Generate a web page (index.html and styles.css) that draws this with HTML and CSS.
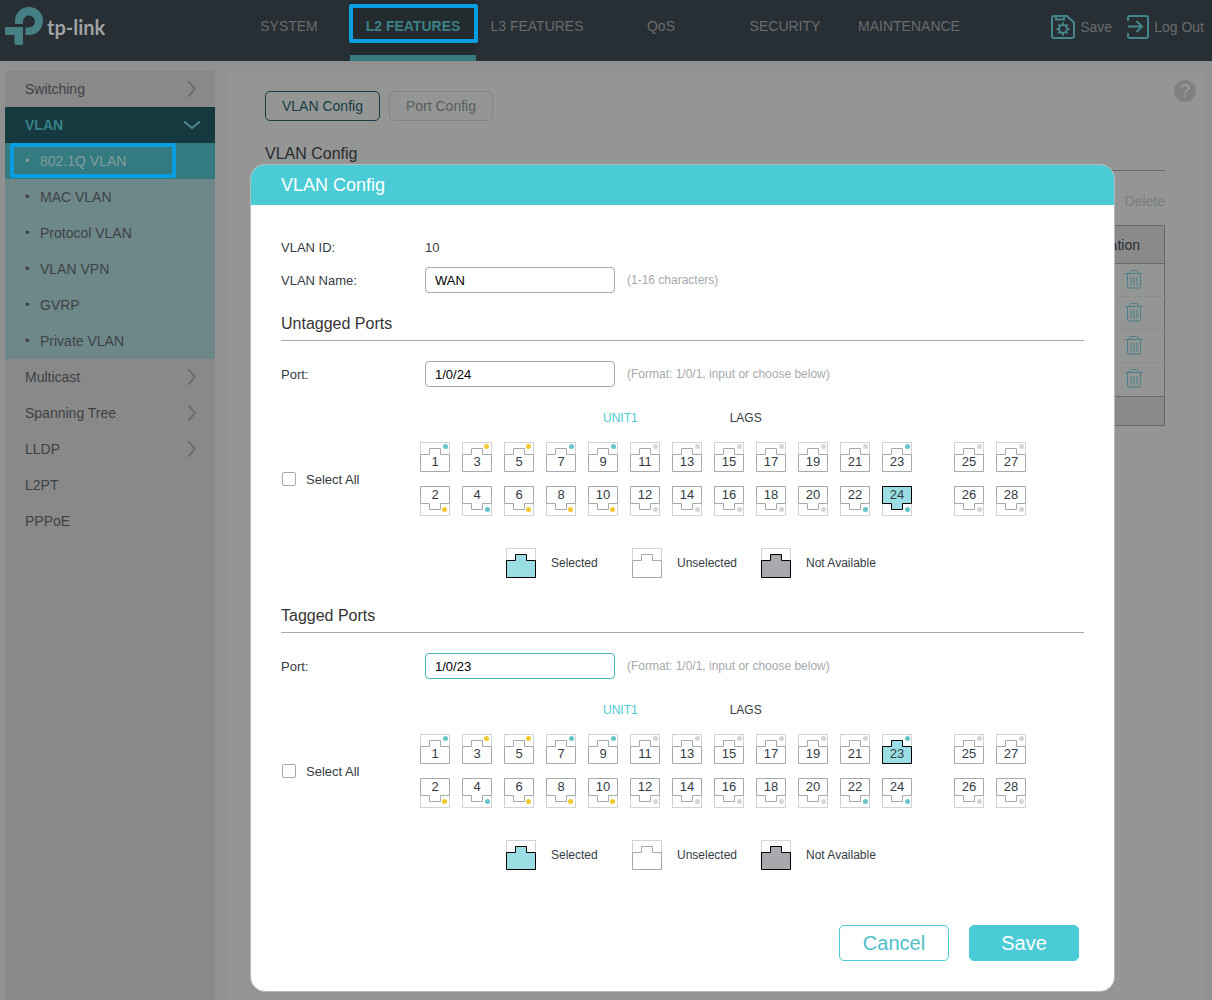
FILE: index.html
```html
<!DOCTYPE html>
<html lang="en">
<head>
<meta charset="utf-8">
<meta name="viewport" content="width=device-width, initial-scale=1">
<title>VLAN Config</title>
<link rel="stylesheet" href="styles.css">
</head>
<body>
<svg class="sprite" aria-hidden="true">
  <symbol id="jack-up" viewBox="0 0 30 30"><rect class="frame" x=".5" y=".5" width="29" height="29"/><path class="jack" d="M.5 12.5H9.5V6.5H20.5V12.5H29.5V29.5H.5Z"/></symbol>
  <symbol id="jack-down" viewBox="0 0 30 30"><rect class="frame" x=".5" y=".5" width="29" height="29"/><path class="jack" d="M.5 .5H29.5V17.5H20.5V23.5H9.5V17.5H.5Z"/></symbol>
  <symbol id="chevron" viewBox="0 0 10 18"><path d="M1.5 1.5L8 9L1.5 16.5"/></symbol>
  <symbol id="trash" viewBox="0 0 18 19"><path d="M0 3.500H18M4.500 3.500Q4.500 .5 6.500 .5H11.500Q13.500 .5 13.500 3.500M2.500 3.500V16.500Q2.500 18 4 18H14Q15.500 18 15.500 16.500V3.500"/><path class="bars" d="M6 7V15.500M9 7V15.500M12 7V15.500"/></symbol>
</svg>

<header class="topbar">
  <a class="brand" href="#">
    <svg class="logo" viewBox="0 0 38 38" aria-hidden="true"><path d="M10 17V14A14 14 0 1 1 24 28H20.500V20.500H24A6 6 0 1 0 18 14V17Z"/><path d="M0 20H18V36.500Q18 38 16.500 38H11.500Q9.500 38 9.500 36V28H1Q0 28 0 27Z"/></svg>
    <span>tp-link</span>
  </a>
  <nav class="mainnav">
    <a href="#">SYSTEM</a>
    <a href="#" class="active">L2 FEATURES</a>
    <a href="#">L3 FEATURES</a>
    <a href="#">QoS</a>
    <a href="#">SECURITY</a>
    <a href="#">MAINTENANCE</a>
  </nav>
  <div class="actions">
    <button type="button">
      <svg viewBox="0 0 24 24" aria-hidden="true"><path d="M1 3Q1 1 3 1H16L23 7.500V21Q23 23 21 23H3Q1 23 1 21ZM5 1V4.500H13V1"/><circle cx="12" cy="14" r="4"/><path d="M12 7.500V10M12 18V20.500M5.500 14H8M16 14H18.500M7.400 9.400L9.200 11.200M14.800 16.800L16.600 18.600M7.400 18.600L9.200 16.800M14.800 11.200L16.600 9.400"/></svg>
      Save
    </button>
    <button type="button">
      <svg viewBox="0 0 22 24" aria-hidden="true"><path d="M1 6V3Q1 1 3 1H19Q21 1 21 3V21Q21 23 19 23H3Q1 23 1 21V18M1 11.500H15M9.500 6L15 11.500L9.500 17"/></svg>
      Log Out
    </button>
  </div>
</header>

<div class="page">
  <nav class="sidebar">
    <a href="#">Switching<svg class="chev"><use href="#chevron"/></svg></a>
    <a href="#" class="open">VLAN<svg class="down" viewBox="0 0 18 10"><path d="M1 1.500L9 8L17 1.500"/></svg></a>
    <ul>
      <li class="current"><a href="#">802.1Q VLAN</a></li>
      <li><a href="#">MAC VLAN</a></li>
      <li><a href="#">Protocol VLAN</a></li>
      <li><a href="#">VLAN VPN</a></li>
      <li><a href="#">GVRP</a></li>
      <li><a href="#">Private VLAN</a></li>
    </ul>
    <a href="#">Multicast<svg class="chev"><use href="#chevron"/></svg></a>
    <a href="#">Spanning Tree<svg class="chev"><use href="#chevron"/></svg></a>
    <a href="#">LLDP<svg class="chev"><use href="#chevron"/></svg></a>
    <a href="#">L2PT</a>
    <a href="#">PPPoE</a>
  </nav>

  <main class="content">
    <button type="button" class="help" aria-label="Help">?</button>
    <div class="pagetabs">
      <button type="button" class="selected">VLAN Config</button>
      <button type="button">Port Config</button>
    </div>
    <h2>VLAN Config</h2>
    <div class="tools"><button type="button">Delete</button></div>
    <table class="vlans">
      <thead><tr><th></th><th class="op">Operation</th></tr></thead>
      <tbody>
        <tr><td></td><td><button type="button" aria-label="Delete"><svg><use href="#trash"/></svg></button></td></tr>
        <tr><td></td><td><button type="button" aria-label="Delete"><svg><use href="#trash"/></svg></button></td></tr>
        <tr><td></td><td><button type="button" aria-label="Delete"><svg><use href="#trash"/></svg></button></td></tr>
        <tr><td></td><td><button type="button" aria-label="Delete"><svg><use href="#trash"/></svg></button></td></tr>
      </tbody>
      <tfoot><tr><td colspan="2"></td></tr></tfoot>
    </table>
  </main>
</div>

<div class="overlay">
  <form class="modal" role="dialog" aria-labelledby="dialog-title">
    <h1 id="dialog-title">VLAN Config</h1>
    <div class="modal-body">
      <div class="row id-row"><span class="label">VLAN ID:</span><span>10</span></div>
      <div class="row"><label class="label" for="vlan-name">VLAN Name:</label><input type="text" id="vlan-name" value="WAN"><span class="hint">(1-16 characters)</span></div>

      <section>
        <h3>Untagged Ports</h3>
        <div class="row"><label class="label" for="untagged">Port:</label><input type="text" id="untagged" value="1/0/24"><span class="hint">(Format: 1/0/1, input or choose below)</span></div>
        <div class="units"><button type="button" class="selected">UNIT1</button><button type="button">LAGS</button></div>
        <div class="picker">
          <label class="all"><input type="checkbox">Select All</label>
          <div class="ports" data-selected="24"></div>
        </div>
        <ul class="legend">
          <li><svg class="on"><use href="#jack-up"/></svg>Selected</li>
          <li><svg><use href="#jack-up"/></svg>Unselected</li>
          <li><svg class="off"><use href="#jack-up"/></svg>Not Available</li>
        </ul>
      </section>

      <section>
        <h3>Tagged Ports</h3>
        <div class="row"><label class="label" for="tagged">Port:</label><input type="text" id="tagged" class="focused" value="1/0/23"><span class="hint">(Format: 1/0/1, input or choose below)</span></div>
        <div class="units"><button type="button" class="selected">UNIT1</button><button type="button">LAGS</button></div>
        <div class="picker">
          <label class="all"><input type="checkbox">Select All</label>
          <div class="ports" data-selected="23"></div>
        </div>
        <ul class="legend">
          <li><svg class="on"><use href="#jack-up"/></svg>Selected</li>
          <li><svg><use href="#jack-up"/></svg>Unselected</li>
          <li><svg class="off"><use href="#jack-up"/></svg>Not Available</li>
        </ul>
      </section>

      <div class="buttons">
        <button type="button">Cancel</button>
        <button type="submit" class="primary">Save</button>
      </div>
    </div>
  </form>
</div>
<script src="ports.js"></script>
</body>
</html>
```

FILE: styles.css
```css
* { box-sizing: border-box; }

body {
  margin: 0;
  min-height: 100vh;
  display: flex;
  flex-direction: column;
  background: #919191;
  color: #353c44;
  font-family: "Liberation Sans", Arial, sans-serif;
  font-size: 14px;
}

a { color: inherit; text-decoration: none; }
ul { list-style: none; margin: 0; padding: 0; }
svg { fill: none; }
button, input { font: inherit; color: inherit; }
button { padding: 0; border: 0; background: none; cursor: pointer; }
.sprite { position: absolute; width: 0; height: 0; }

/* Top bar */
.topbar {
  display: flex;
  height: 61px;
  padding: 0 7px 0 5px;
  background: #272e34;
  color: #686c6f;
}
.brand {
  display: flex;
  gap: 4px;
  width: 222px;
  padding-top: 7px;
  color: #a0a2a3;
  font-family: Lato, sans-serif;
  font-size: 20px;
  font-weight: bold;
  line-height: 40px;
}
.logo { width: 38px; height: 38px; }
.logo path { fill: #468085; }
.mainnav { display: flex; flex: 1; }
.mainnav a {
  flex: 0 1 124px;
  line-height: 52px;
  text-align: center;
  white-space: nowrap;
}
.mainnav .active {
  position: relative;
  flex-basis: 126px;
  margin: 0 -1px;
  border-bottom: 6px solid #387a7f;
  background: #232b2e;
  color: #3d8186;
  font-weight: bold;
}
.mainnav .active::after {
  content: "";
  position: absolute;
  inset: 4px -2px 12px -1px;
  border: 4px solid #079fe2;
  border-radius: 2px;
}
.actions { display: flex; gap: 15px; padding: 0 1px 7px 0; }
.actions button { display: flex; align-items: center; gap: 5px; white-space: nowrap; }
.actions svg { width: 24px; height: 24px; stroke: #45868b; stroke-width: 2; }
.actions button + button svg { width: 22px; }

/* Side menu */
.page { display: flex; flex: 1; gap: 10px; padding: 10px 7px 0 5px; }
.sidebar { flex: 0 0 210px; background: #898989; color: #3d4246; line-height: 36px; }
.sidebar > a {
  display: flex;
  align-items: center;
  justify-content: space-between;
  height: 36px;
  padding: 0 18px 0 20px;
}
.chev { width: 10px; height: 18px; stroke: #6c6f70; stroke-width: 2; }
.sidebar .open { padding-right: 14px; background: #15393f; color: #388187; font-weight: bold; }
.down { width: 18px; height: 10px; stroke: #4c8a8f; stroke-width: 2; }
.sidebar ul { background: #6e8889; }
.sidebar li { display: flex; padding-left: 20px; }
.sidebar li::before { content: "•"; width: 15px; font-size: 13px; }
.sidebar .current { position: relative; background: #337b80; color: #849b9d; }
.sidebar .current::after {
  content: "";
  position: absolute;
  inset: 0 39px 1px 5px;
  border: 4px solid #079fe2;
  border-radius: 2px;
}

/* Page behind the dialog */
.content { position: relative; flex: 1; padding: 20px 40px; background: #949695; }
.help {
  position: absolute;
  top: 9px;
  right: 9px;
  width: 22px;
  height: 22px;
  border-radius: 50%;
  background: #807f82;
  color: #a0a0a0;
  font-size: 18px;
  line-height: 22px;
}
.pagetabs { display: flex; gap: 9px; }
.pagetabs button {
  height: 30px;
  padding: 0 16px;
  border: 1px solid #838585;
  border-radius: 5px;
  color: #5a5d5f;
}
.pagetabs .selected { border-color: #153d43; color: #153d43; }
.content h2 {
  margin: 22px 0 0;
  padding-bottom: 5px;
  border-bottom: 1px solid #68696b;
  color: #292a2c;
  font-size: 16px;
  font-weight: normal;
  line-height: 22px;
}
.tools { padding: 20px 0 14px; text-align: right; line-height: 20px; color: #7b7c7e; }
.vlans {
  width: 100%;
  border: 1px solid #68696b;
  border-collapse: collapse;
}
.vlans th { height: 38px; padding: 0; background: #898a8a; font-weight: normal; color: #292c30; }
.vlans .op { width: 110px; }
.vlans tbody td { height: 33px; padding: 0 21px 1px 0; border-top: 1px solid #8d8f8f; text-align: right; }
.vlans tbody button { display: block; margin-left: auto; }
.vlans tbody tr:first-child td, .vlans tfoot td { border-top: 1px solid #68696b; }
.vlans tbody tr:last-child td { height: 34px; padding-bottom: 2px; }
.vlans tfoot td { height: 29px; background: #898a8a; }
.vlans svg { display: block; width: 18px; height: 19px; stroke: #4a7f83; }
.bars { stroke: #6b8b8d; stroke-width: 2; }

/* Dialog */
.overlay { position: absolute; inset: 0; padding: 164px 97px 8px 250px; }
.modal {
  overflow: hidden;
  border: 1px solid #b5b9b9;
  border-radius: 15px;
  background: #fff;
  font-size: 13px;
}
.modal h1 {
  margin: 0;
  padding-left: 30px;
  background: #4acbd6;
  color: #fff;
  font-size: 18px;
  font-weight: normal;
  line-height: 40px;
}
.modal-body { padding: 32px 30px 30px; }
.row { display: flex; align-items: center; }
.id-row { height: 20px; margin-bottom: 10px; }
.label { width: 144px; }
.row input {
  width: 190px;
  height: 26px;
  padding: 0 9px;
  border: 1px solid #a7a9ac;
  border-radius: 4px;
  background: #fff;
  color: #000;
}
.row .focused { border-color: #4cb5bd; }
.hint { margin-left: 12px; color: #a7a9ac; font-size: 12px; }
section { margin-top: 20px; padding-bottom: 7px; }
section h3 {
  margin: 0 0 20px;
  padding-bottom: 5px;
  border-bottom: 1px solid #a7a9ac;
  color: #333;
  font-size: 16px;
  font-weight: normal;
  line-height: 22px;
}
.units { display: flex; gap: 92px; margin: 20px 0 13px 322px; font-size: 12px; line-height: 22px; }
.units .selected { color: #4acbd6; }
.picker { display: flex; align-items: center; }
.all { display: flex; align-items: center; gap: 10px; width: 139px; padding-left: 1px; }
.all input {
  appearance: none;
  width: 14px;
  height: 14px;
  margin: 0;
  border: 1px solid #a7a9ac;
  border-radius: 2px;
}
.ports {
  display: grid;
  grid-template-rows: 30px 30px;
  grid-auto-flow: column;
  gap: 14px 12px;
}
.port {
  position: relative;
  width: 30px;
  height: 30px;
  padding-top: 10px;
  line-height: 20px;
}
.port:nth-child(even) { padding: 0 0 12px; line-height: 18px; }
.port:nth-child(n+25) { margin-left: 30px; }
.port:nth-child(n+27) { margin-left: 0; }
.port svg { position: absolute; inset: 0; width: 30px; height: 30px; }
.port span { position: relative; display: block; }
.frame { stroke: #d1d3d4; }
.on { --jack: #9adde3; --edge: #000; }
.off { --jack: #a7a9ac; --edge: #000; }
.jack { fill: var(--jack, #fff); stroke: var(--edge, #a7a9ac); }
.led { fill: #d6d6d6; }
.led.teal { fill: #66c4cb; }
.led.amber { fill: #f3c72e; }
.legend {
  display: grid;
  grid-template-columns: 126px 129px auto;
  margin: 32px 0 0 225px;
  font-size: 12px;
}
.legend li { display: flex; align-items: center; gap: 15px; white-space: nowrap; }
.legend svg { width: 30px; height: 30px; }
.buttons { display: flex; justify-content: flex-end; gap: 20px; margin-top: 48px; padding-right: 5px; }
.buttons button {
  width: 110px;
  height: 36px;
  border: 1px solid #4acbd6;
  border-radius: 5px;
  color: #4fc0ca;
  font-size: 20px;
}
.buttons .primary { background: #4acbd6; color: #fff; }
```

FILE: ports.js
```js
// Link speed light of each port; ports not listed have no link.
const leds = {
  teal: [1, 4, 7, 9, 22, 23, 24],
  amber: [2, 3, 5, 6, 8, 10]
};

for (const grid of document.querySelectorAll(".ports")) {
  for (let n = 1; n <= 28; n++) {
    const up = n % 2 === 1;
    const led = Object.keys(leds).find(key => leds[key].includes(n)) || "";
    const on = n === Number(grid.dataset.selected);
    const cx = led === "amber" ? 24.5 : 25.5;
    grid.insertAdjacentHTML("beforeend", `
      <button type="button" class="port${on ? " on" : ""}" aria-pressed="${on}">
        <svg viewBox="0 0 30 30" aria-hidden="true">
          <use href="#jack-${up ? "up" : "down"}"/>
          <circle class="led ${led}" cx="${cx}" cy="${up ? 4.5 : 23.5}" r="2.5"/>
        </svg>
        <span>${n}</span>
      </button>`);
  }
}
```
